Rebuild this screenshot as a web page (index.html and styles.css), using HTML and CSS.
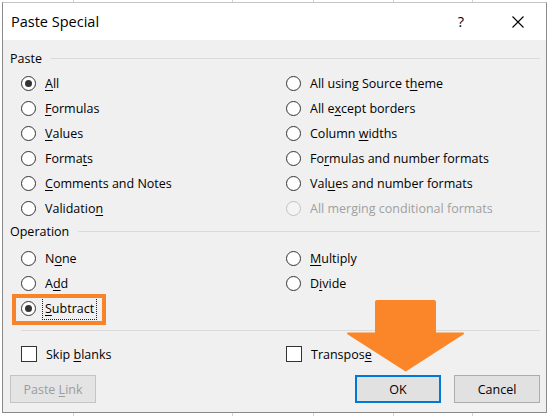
FILE: index.html
```html
<!DOCTYPE html>
<html lang="en">
<head>
	<meta charset="UTF-8">
	<title>Paste Special</title>
	<link rel="stylesheet" href="styles.css">
</head>
<body>
<div class="dialog">
	<!-- title bar -->
	<div class="titlebar">
		<span class="title">Paste Special</span>
		<span class="help">?</span>
		<svg class="close" width="12" height="12" viewBox="0 0 12 12">
			<path d="M0.5 0.5 L11.5 11.5 M11.5 0.5 L0.5 11.5" stroke="#000" stroke-width="1.1" fill="none"/>
		</svg>
	</div>

	<div class="content">
		<!-- Paste group -->
		<div class="group"><span>Paste</span><i class="rule"></i></div>
		<div class="options">
			<div class="col">
				<label class="opt"><i class="radio on"></i><span><u>A</u>ll</span></label>
				<label class="opt"><i class="radio"></i><span><u>F</u>ormulas</span></label>
				<label class="opt"><i class="radio"></i><span><u>V</u>alues</span></label>
				<label class="opt"><i class="radio"></i><span>Forma<u>t</u>s</span></label>
				<label class="opt"><i class="radio"></i><span><u>C</u>omments and Notes</span></label>
				<label class="opt"><i class="radio"></i><span>Validatio<u>n</u></span></label>
			</div>
			<div class="col">
				<label class="opt"><i class="radio"></i><span>All using Source t<u>h</u>eme</span></label>
				<label class="opt"><i class="radio"></i><span>All e<u>x</u>cept borders</span></label>
				<label class="opt"><i class="radio"></i><span>Column <u>w</u>idths</span></label>
				<label class="opt"><i class="radio"></i><span>Fo<u>r</u>mulas and number formats</span></label>
				<label class="opt"><i class="radio"></i><span>Val<u>u</u>es and number formats</span></label>
				<label class="opt disabled"><i class="radio"></i><span>All mer<u>g</u>ing conditional formats</span></label>
			</div>
		</div>

		<!-- Operation group -->
		<div class="group op"><span>Operation</span><i class="rule"></i></div>
		<div class="options op-list">
			<div class="col">
				<label class="opt"><i class="radio"></i><span>N<u>o</u>ne</span></label>
				<label class="opt"><i class="radio"></i><span>A<u>d</u>d</span></label>
				<label class="opt"><span class="highlight"></span><i class="radio on"></i><span class="focus"><u>S</u>ubtract</span></label>
			</div>
			<div class="col">
				<label class="opt"><i class="radio"></i><span><u>M</u>ultiply</span></label>
				<label class="opt"><i class="radio"></i><span>D<u>i</u>vide</span></label>
			</div>
		</div>

		<div class="sep"></div>

		<div class="options checks">
			<label class="opt"><i class="check"></i><span>Skip <u>b</u>lanks</span></label>
			<label class="opt"><i class="check"></i><span>Transpos<u>e</u></span></label>
		</div>

		<!-- buttons -->
		<div class="buttons">
			<button class="btn" disabled>Paste <u>L</u>ink</button>
			<button class="btn default">OK</button>
			<button class="btn">Cancel</button>
		</div>
	</div>
</div>

<!-- annotation arrow -->
<svg class="arrow" width="130" height="90" viewBox="0 0 130 90">
	<path d="M37 10 H94 Q96 10 96 12 V43 H35 V12 Q35 10 37 10 Z" fill="#fb8629"/>
	<polygon points="8,43.5 123,43.5 65.7,80.5" fill="#fb8629" stroke="#fb8629" stroke-width="2" stroke-linejoin="round"/>
</svg>
</body>
</html>
```

FILE: styles.css
```css
body {
	margin: 0;
	width: 548px;
	height: 416px;
	overflow: hidden;
	position: relative;
	font-family: "Open Sans", "Noto Sans", sans-serif;
	font-size: 12.5px;
	color: #000;
	background-color: #fff;
	background-image: linear-gradient(90deg,
		transparent 73px, #d4d4d4 73px, #d4d4d4 74px, transparent 74px,
		transparent 232px, #d4d4d4 232px, #d4d4d4 233px, transparent 233px,
		transparent 313px, #d4d4d4 313px, #d4d4d4 314px, transparent 314px,
		transparent 393px, #d4d4d4 393px, #d4d4d4 394px, transparent 394px,
		transparent 472px, #d4d4d4 472px, #d4d4d4 473px, transparent 473px);
}

u {
	text-decoration-thickness: 1px;
	text-underline-offset: 2px;
}

.dialog {
	margin: 2px 0 0 2px;
	width: 545px;
	box-sizing: border-box;
	border: 1px solid #8a8a8a;
	border-top-color: #c4c4c4;
	background: #f0f0f0;
}

/* title bar */
.titlebar {
	height: 37px;
	background: #fff;
	display: flex;
	align-items: center;
}

.title {
	flex: 1;
	padding-left: 8px;
	font-size: 14.5px;
}

.help {
	width: 10px;
	text-align: center;
	font-size: 14.5px;
	margin-right: 46px;
}

.close {
	margin-right: 22px;
	display: block;
}

.content {
	padding: 0 6px 9px 7px;
}

/* group headers */
.group {
	display: flex;
	align-items: center;
	gap: 9px;
	height: 20px;
	margin-top: 8px;
}

.group.op {
	margin-top: 0;
}

.rule {
	flex: 1;
	height: 1px;
	background: #dadada;
}

/* options */
.options {
	display: grid;
	grid-template-columns: 265px 1fr;
	padding-left: 11px;
	margin-top: 3px;
}

.options.op-list {
	margin-top: 5px;
}

.opt {
	display: flex;
	align-items: center;
	gap: 9px;
	height: 25px;
	position: relative;
	white-space: nowrap;
}

.radio {
	width: 15px;
	height: 15px;
	box-sizing: border-box;
	border: 1px solid #333;
	border-radius: 50%;
	background: #fff;
	flex: none;
	display: flex;
	align-items: center;
	justify-content: center;
}

.radio.on:after {
	content: '';
	width: 7px;
	height: 7px;
	border-radius: 50%;
	background: #333;
}

.disabled {
	color: #a0a0a0;
}

.disabled .radio {
	border-color: #c2c2c2;
	background: #f4f4f4;
}

/* orange annotation box */
.highlight {
	position: absolute;
	left: -9px;
	top: -2px;
	width: 94px;
	height: 31px;
	box-sizing: border-box;
	border: 4px solid #f7832a;
}

.focus {
	outline: 1px dotted #222;
	outline-offset: 1px;
	padding: 1px 1px;
	margin: 0 -1px;
}

.sep {
	height: 1px;
	background: #dadada;
	margin: 9px 0 0 11px;
}

.checks {
	margin-top: 11px;
}

.checks .opt {
	height: 24px;
}

.check {
	width: 16px;
	height: 16px;
	box-sizing: border-box;
	border: 1px solid #333;
	background: #fff;
	flex: none;
}

/* buttons */
.buttons {
	display: flex;
	gap: 13px;
	margin-top: 9px;
}

.btn {
	width: 86px;
	height: 28px;
	box-sizing: border-box;
	border: 1px solid #adadad;
	background: #e1e1e1;
	font-family: inherit;
	font-size: 12.5px;
	color: #000;
	padding: 0;
}

.btn:first-child {
	margin-right: auto;
}

.btn:disabled {
	color: #9d9d9d;
	background: #e4e4e4;
	border-color: #c4c4c4;
}

.btn.default {
	border: 2px solid #0078d7;
}

.arrow {
	position: absolute;
	left: 340px;
	top: 290px;
}
```
